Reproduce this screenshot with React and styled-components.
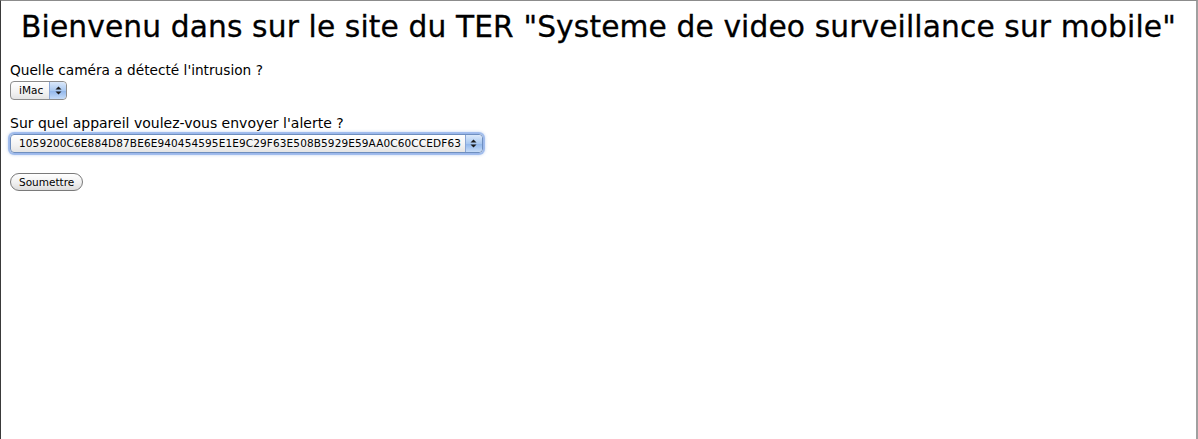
import React from 'react';
import styled, { createGlobalStyle } from 'styled-components';

const GlobalStyle = createGlobalStyle`
  html, body {
    margin: 0;
    padding: 0;
    background: #fff;
  }
  body {
    font-family: "DejaVu Sans", "Liberation Sans", sans-serif;
    color: #000;
  }
`;

const Frame = styled.div`
  box-sizing: border-box;
  width: 1198px;
  height: 439px;
  border-top: 1px solid #8c8c8c;
  border-left: 1px solid #3a3a3a;
  border-right: 2px solid #a0a0a0;
  background: #fff;
  overflow: hidden;
`;

const Title = styled.h1`
  margin: 7px 0 0;
  text-align: center;
  font-size: 29.7px;
  font-weight: normal;
  line-height: 38px;
  letter-spacing: 0.12px;
  -webkit-text-stroke: 0.3px #000;
`;

const Form = styled.form`
  display: flex;
  flex-direction: column;
  align-items: flex-start;
  padding: 15px 0 0 9px;
`;

const Field = styled.div`
  display: flex;
  flex-direction: column;
  align-items: flex-start;
  margin-bottom: ${({ $gap }) => $gap}px;
`;

const Label = styled.label`
  font-size: ${({ $size }) => $size || 14}px;
  line-height: 18px;
  margin-bottom: 2px;
`;

const SelectWrap = styled.div`
  position: relative;
  display: inline-flex;
  align-items: center;
  height: 17px;
  border: 1px solid ${({ $focus }) => ($focus ? '#6f8fbf' : '#8d8d8d')};
  border-radius: 4px;
  background: linear-gradient(#ffffff, #f2f2f2 60%, #e4e4e4);
  box-shadow: ${({ $focus }) =>
    $focus ? '0 0 0 2px rgba(120,160,230,0.55), 0 0 3px 2px rgba(110,150,220,0.45)' : 'none'};
  font-size: 10.5px;
  padding-left: ${({ $pad }) => $pad}px;
`;

const SelectText = styled.span`
  line-height: 17px;
  letter-spacing: ${({ $ls }) => $ls || 0}px;
  padding-right: ${({ $right }) => $right}px;
`;

const Arrows = styled.span`
  display: flex;
  align-items: center;
  justify-content: center;
  width: 16px;
  height: 17px;
  border-left: 1px solid #8aa6d6;
  border-radius: 0 4px 4px 0;
  background: linear-gradient(#dbe9fb, #a9c8f0 50%, #8fb5ea 51%, #c6dcf8);
`;

const Button = styled.button`
  font-family: "DejaVu Sans", "Liberation Sans", sans-serif;
  font-size: 10.5px;
  height: 18px;
  padding: 0 8px;
  line-height: 16px;
  border: 1px solid #7a7a7a;
  border-radius: 9px;
  background: linear-gradient(#ffffff, #f0f0f0 55%, #dcdcdc);
  color: #000;
  cursor: pointer;
`;

const UpDown = () => (
  <svg width="7" height="9" viewBox="0 0 7 9">
    <path d="M3.5 0.5 L6.5 3.5 L0.5 3.5 Z" fill="#1a1a1a" />
    <path d="M3.5 8.5 L6.5 5.5 L0.5 5.5 Z" fill="#1a1a1a" />
  </svg>
);

const App = () => (
  <>
    <GlobalStyle />
    <Frame>
      <Title>Bienvenu dans sur le site du TER "Systeme de video surveillance sur mobile"</Title>
      <Form onSubmit={(e) => e.preventDefault()}>
        <Field $gap={14}>
          <Label $size={13.7}>Quelle caméra a détecté l'intrusion ?</Label>
          <SelectWrap $pad={8}>
            <SelectText $right={6}>iMac</SelectText>
            <Arrows><UpDown /></Arrows>
          </SelectWrap>
        </Field>
        <Field $gap={20}>
          <Label>Sur quel appareil voulez-vous envoyer l'alerte ?</Label>
          <SelectWrap $pad={8} $focus>
            <SelectText $right={4} $ls={0.12}>
              1059200C6E884D87BE6E940454595E1E9C29F63E508B5929E59AA0C60CCEDF63
            </SelectText>
            <Arrows><UpDown /></Arrows>
          </SelectWrap>
        </Field>
        <Button type="submit">Soumettre</Button>
      </Form>
    </Frame>
  </>
);

export default App;
